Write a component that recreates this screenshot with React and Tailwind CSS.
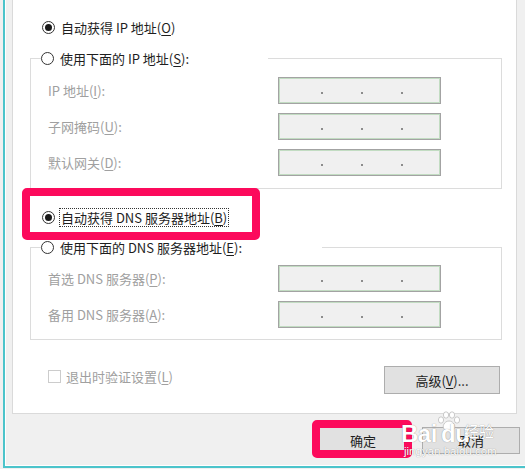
import React from "react";

const FONT = "font-['Noto_Sans_CJK_SC','Noto_Sans',sans-serif]";

function U({ children }) {
  return <span className="underline underline-offset-[2px] decoration-[1px]">{children}</span>;
}

function Radio({ checked }) {
  return (
    <span className="w-[13px] h-[13px] rounded-full border border-[#333333] bg-white flex items-center justify-center shrink-0">
      {checked && <span className="w-[7px] h-[7px] rounded-full bg-[#1a1a1a]" />}
    </span>
  );
}

function IpBox() {
  return (
    <div className="w-[163px] h-[27px] border border-[#a3a3a3] bg-[#f0f0f0] shadow-[inset_0_0_0_1px_#c2dcc2] flex items-end pb-[9px] pl-[42px] gap-[38px]">
      {[0, 1, 2].map((i) => (
        <span key={i} className="w-[2px] h-[2px] bg-[#8c8c8c]" />
      ))}
    </div>
  );
}

function FieldRow({ label }) {
  return (
    <div className="flex items-center h-[27px]">
      <span className="ml-[7px] w-[230px] text-[#a0a0a0]">{label}</span>
      <IpBox />
    </div>
  );
}

export default function App() {
  return (
    <div className={`relative w-[525px] h-[469px] bg-[#f0f0f0] overflow-hidden text-[13px] leading-none text-[#1e1e1e] ${FONT}`}>
      <div className="ml-[3px] w-[522px] h-[468px] border-l-2 border-b-2 border-[#4cc4cb]">
        <div className="w-full h-full border-l border-b border-white bg-[#f0f0f0] flex flex-col">
          {/* White panel */}
          <div className="ml-[6px] w-[505px] h-[414px] shrink-0 bg-white border-x border-b border-[#dadada] flex flex-col">
            {/* Radio 1 */}
            <div className="mt-[16px] ml-[29px] h-[22px] flex items-center gap-[6px]">
              <Radio checked />
              <span>自动获得 IP 地址(<U>O</U>)</span>
            </div>

            {/* Group 1 */}
            <fieldset className="mt-[9px] ml-[17px] w-[472px] border border-[#dcdcdc] pl-[10px] pt-[8px] pb-[12px]">
              <legend className="p-0">
                <div className="w-[227px] h-[22px] flex items-center gap-[6px]">
                  <Radio />
                  <span>使用下面的 IP 地址(<U>S</U>):</span>
                </div>
              </legend>
              <div className="flex flex-col gap-[9px]">
                <FieldRow label={<>IP 地址(<U>I</U>):</>} />
                <FieldRow label={<>子网掩码(<U>U</U>):</>} />
                <FieldRow label={<>默认网关(<U>D</U>):</>} />
              </div>
            </fieldset>

            {/* Radio 3 */}
            <div className="mt-[17px] ml-[29px] h-[22px] flex items-center gap-[4px]">
              <Radio checked />
              <span className="h-[19px] px-[1px] flex items-center border border-dotted border-[#333333]">
                自动获得 DNS 服务器地址(<U>B</U>)
              </span>
            </div>

            {/* Group 2 */}
            <fieldset className="mt-[8px] ml-[17px] w-[472px] border border-[#dcdcdc] pl-[10px] pt-[7px] pb-[11px]">
              <legend className="p-0">
                <div className="w-[281px] h-[22px] flex items-center gap-[6px]">
                  <Radio />
                  <span>使用下面的 DNS 服务器地址(<U>E</U>):</span>
                </div>
              </legend>
              <div className="flex flex-col gap-[9px]">
                <FieldRow label={<>首选 DNS 服务器(<U>P</U>):</>} />
                <FieldRow label={<>备用 DNS 服务器(<U>A</U>):</>} />
              </div>
            </fieldset>

            {/* Checkbox + advanced */}
            <div className="mt-[25px] pr-[16px] flex items-start justify-between">
              <div className="ml-[35px] h-[22px] flex items-center gap-[5px]">
                <span className="w-[13px] h-[13px] border border-[#cccccc] bg-white shrink-0" />
                <span className="text-[#a0a0a0]">退出时验证设置(<U>L</U>)</span>
              </div>
              <div className="mt-[1px] w-[116px] h-[28px] border border-[#adadad] bg-[#e1e1e1] flex items-center justify-center">
                高级(<U>V</U>)...
              </div>
            </div>
          </div>

          {/* Bottom buttons */}
          <div className="mt-[13px] ml-[308px] flex gap-[10px]">
            <div className="w-[98px] h-[27px] shrink-0 border border-[#0078d7] bg-[#e1e1e1] flex items-center justify-center">
              确定
            </div>
            <div className="w-[98px] h-[27px] shrink-0 border border-[#adadad] bg-[#e1e1e1] flex items-center justify-center">
              取消
            </div>
          </div>
        </div>
      </div>

      {/* Annotation highlights */}
      <div className="absolute left-[22px] top-[188px] w-[238px] h-[52px] border-[8px] border-[#fc0a5c] rounded-[5px]" />
      <div className="absolute left-[312px] top-[420px] w-[100px] h-[38px] border-[8px] border-[#fc0a5c] rounded-[5px]" />

      {/* Watermark */}
      <div className="absolute left-[401px] top-[409px] w-[100px] h-[50px] text-white pointer-events-none [text-shadow:0_0_1px_rgba(0,0,0,0.45)] font-['Liberation_Sans',sans-serif]">
        <svg className="absolute left-[35px] top-[2px]" width="26" height="20" viewBox="0 0 26 20">
          <g fill="#ffffff" stroke="#bdbdbd" strokeWidth="0.8">
            <ellipse cx="5" cy="9" rx="2.6" ry="3.2" />
            <ellipse cx="10" cy="4" rx="2.6" ry="3.2" />
            <ellipse cx="16" cy="4" rx="2.6" ry="3.2" />
            <ellipse cx="21" cy="9" rx="2.6" ry="3.2" />
            <path d="M13 10 C8 10 6 16 8 18 C10 20 16 20 18 18 C20 16 18 10 13 10 Z" />
          </g>
        </svg>
        <span className="absolute left-[0px] top-[13px] text-[24px] leading-none font-bold tracking-[-0.5px]">Bai</span>
        <span className="absolute left-[40px] top-[13px] text-[24px] leading-none font-bold tracking-[-0.5px]">du</span>
        <span className={`absolute left-[63px] top-[14px] text-[15px] leading-none ${FONT}`}>经验</span>
        <span className="absolute left-[3px] top-[37px] text-[11.5px] leading-none">jingyan.baidu.com</span>
      </div>
    </div>
  );
}
